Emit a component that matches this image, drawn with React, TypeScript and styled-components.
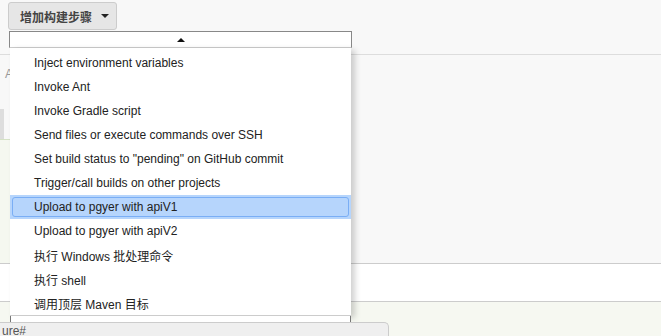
import React from 'react'
import styled, { createGlobalStyle } from 'styled-components'

const GlobalStyle = createGlobalStyle`
  body {
    margin: 0;
    font-family: "Liberation Sans", "Noto Sans CJK SC", Arial, sans-serif;
  }
`

const Screen = styled.div`
  position: relative;
  width: 661px;
  height: 336px;
  overflow: hidden;
  background: #f8f8f8;
  display: flex;
  flex-direction: column;
`

const TopBar = styled.div`
  height: 52px;
  flex: none;
  border-bottom: 1px solid #ddd;
  padding: 2px 0 0 8px;
  box-sizing: content-box;
`

const AddButton = styled.button`
  height: 28px;
  width: 109px;
  display: flex;
  align-items: center;
  gap: 9px;
  padding: 0 0 0 11px;
  border: 1px solid #ccc;
  border-radius: 3px;
  background: #e6e6e6;
  color: #444;
  font-family: "Noto Sans CJK SC", "Liberation Sans", sans-serif;
  font-size: 12px;
  font-weight: 700;
`

const Caret = styled.span`
  width: 0;
  height: 0;
  border-left: 4px solid transparent;
  border-right: 4px solid transparent;
  border-top: 4px solid #222;
`

const Middle = styled.div`
  height: 208px;
  flex: none;
  border-bottom: 1px solid #ccc;
  display: flex;
  flex-direction: column;
`

const PeekLabel = styled.div`
  margin: 13px 0 0 5px;
  height: 12px;
  font-size: 12px;
  line-height: 12px;
  color: #999;
`

const PeekBlock = styled.div`
  margin-top: 29px;
  width: 4px;
  height: 30px;
  background: #ddd;
`

const PeekPanel = styled.div`
  flex: 1;
  width: 300px;
  background: #f5f8f0;
  border-top: 1px solid #d5e2c5;
`

const WhiteBand = styled.div`
  height: 37px;
  flex: none;
  background: #fff;
  border-bottom: 1px solid #ccc;
`

const Footer = styled.div`
  flex: 1;
  background: #f6f8f1;
  padding-top: 20px;
`

const Tab = styled.div`
  position: relative;
  z-index: 2;
  width: 390px;
  height: 15px;
  margin-left: -1px;
  padding: 2px 0 0 2px;
  border: 1px solid #ccc;
  border-bottom: none;
  border-radius: 0 5px 0 0;
  background: #efefef;
  color: #555;
  font-size: 12px;
  line-height: 12px;
  box-sizing: border-box;
`

const Menu = styled.div`
  position: absolute;
  left: 9px;
  top: 31px;
  width: 343px;
  z-index: 1;
`

const ScrollUp = styled.div`
  height: 15px;
  border: 1px solid #888;
  border-bottom-color: #ccc;
  background: #fff;
  display: flex;
  align-items: center;
  justify-content: center;
`

const UpArrow = styled.span`
  width: 0;
  height: 0;
  border-left: 4px solid transparent;
  border-right: 4px solid transparent;
  border-bottom: 4px solid #111;
`

const List = styled.ul`
  list-style: none;
  margin: 0 0 0 1px;
  width: 341px;
  padding: 3px 0 0;
  background: #fff;
  border-bottom: 1px solid #ccc;
  box-shadow: 4px 2px 6px rgba(0, 0, 0, 0.18);
`

const Item = styled.li<{ $selected?: boolean }>`
  height: 24px;
  padding: 2px;
  box-sizing: border-box;
  background: ${(p) => (p.$selected ? '#b6d5fc' : 'transparent')};
  font-size: 12px;
  color: #222;
`

const ItemInner = styled.div<{ $selected?: boolean }>`
  height: 20px;
  display: flex;
  align-items: center;
  padding-left: 21px;
  box-sizing: border-box;
  border: 1px solid ${(p) => (p.$selected ? '#7aaef5' : 'transparent')};
  border-radius: 3px;
`

const ScrollDown = styled.div`
  height: 16px;
  margin-left: 1px;
  width: 341px;
  border-left: 1px solid #777;
  border-right: 1px solid #777;
  box-sizing: border-box;
  background: #fff;
`

const items = [
  'Inject environment variables',
  'Invoke Ant',
  'Invoke Gradle script',
  'Send files or execute commands over SSH',
  'Set build status to "pending" on GitHub commit',
  'Trigger/call builds on other projects',
  'Upload to pgyer with apiV1',
  'Upload to pgyer with apiV2',
  '执行 Windows 批处理命令',
  '执行 shell',
  '调用顶层 Maven 目标',
]

const App: React.FC = () => {
  return (
    <Screen>
      <GlobalStyle />
      <TopBar>
        <AddButton>
          增加构建步骤
          <Caret />
        </AddButton>
      </TopBar>
      <Middle>
        <PeekLabel>A</PeekLabel>
        <PeekBlock />
        <PeekPanel />
      </Middle>
      <WhiteBand />
      <Footer>
        <Tab>ure#</Tab>
      </Footer>
      <Menu>
        <ScrollUp>
          <UpArrow />
        </ScrollUp>
        <List>
          {items.map((label, i) => (
            <Item key={label} $selected={i === 6}>
              <ItemInner $selected={i === 6}>{label}</ItemInner>
            </Item>
          ))}
        </List>
        <ScrollDown />
      </Menu>
    </Screen>
  )
}

export default App
